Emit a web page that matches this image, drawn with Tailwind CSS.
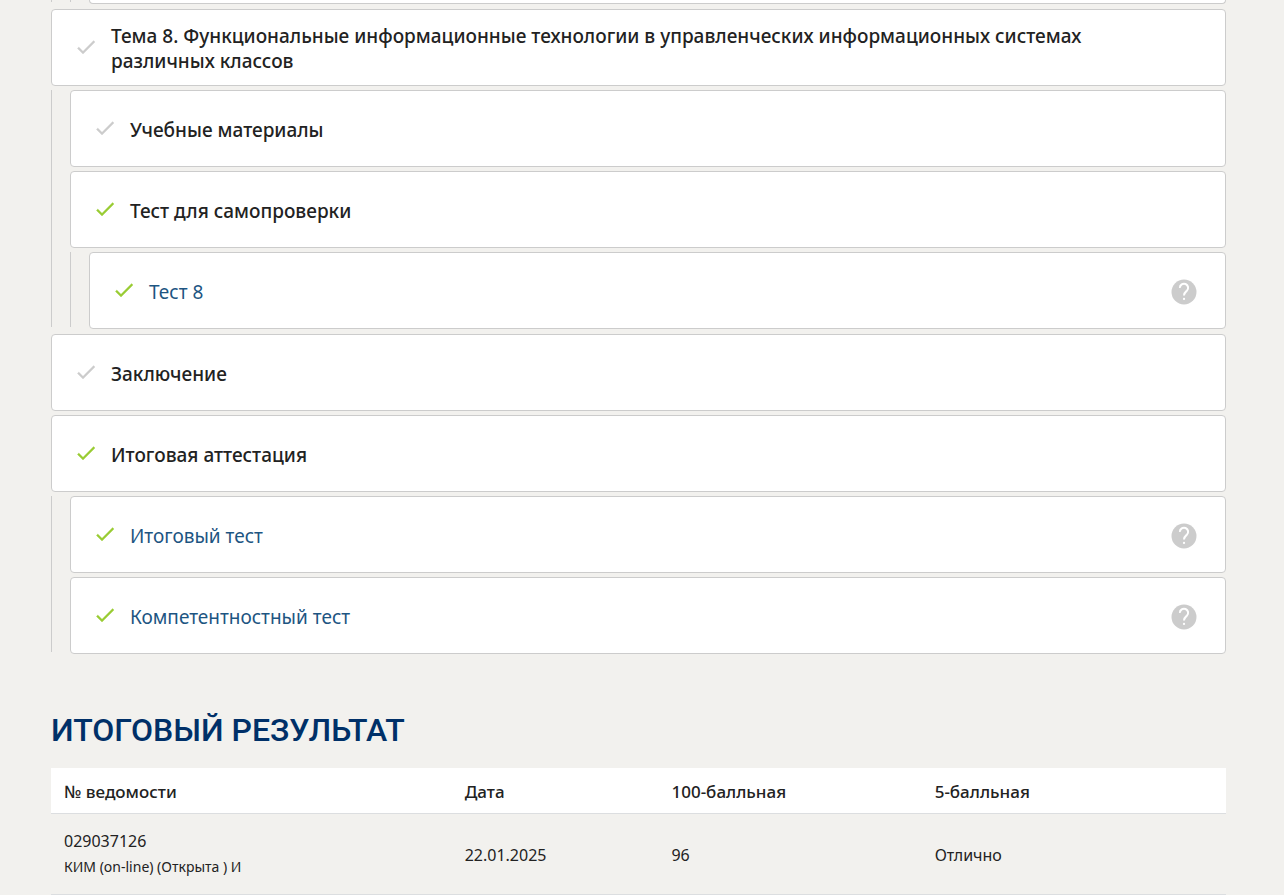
<!DOCTYPE html>
<html lang="ru">

<head>
    <meta charset="UTF-8">
    <meta name="viewport" content="width=device-width, initial-scale=1.0">
    <title>Итоговый результат</title>
    <script src="https://cdn.jsdelivr.net/npm/@tailwindcss/browser@4"></script>
</head>

<body class="bg-[#f2f1ee] font-['Noto_Sans',sans-serif] text-[#222]">

    <!-- shared icons -->
    <svg class="hidden">
        <symbol id="check" viewBox="0 0 24 24">
            <path fill="currentColor" stroke="currentColor" stroke-width="0.3" d="M9 16.17 4.83 12l-1.42 1.41L9 19 21 7l-1.41-1.41z" />
        </symbol>
        <symbol id="help" viewBox="0 0 24 24">
            <circle cx="12" cy="12" r="10" fill="currentColor" />
            <path fill="none" stroke="#fff" stroke-width="1.6" d="M8.7 8.700a3.3 3.3 0 1 1 5.6 2.300C13 12.200 12 12.700 12 14.800" />
            <circle cx="12" cy="17.500" r="0.9" fill="#fff" />
        </symbol>
    </svg>

    <main class="pl-[51px] pr-[58px]">

        <!-- course contents -->
        <section class="flex flex-col gap-1">

            <!-- end of the previous topic -->
            <div class="mb-px flex h-1">
                <div class="h-0.5 w-[19px] border-l border-[#ccc]"></div>
                <div class="h-0.5 w-[19px] border-l border-[#ccc]"></div>
                <div class="flex-1 rounded-b border border-t-0 border-[#ccc] bg-white"></div>
            </div>

            <div class="flex min-h-[77px] items-center gap-[13px] rounded border border-[#ccc] bg-white pr-[26px] pl-[22px]">
                <svg class="mb-0.5 size-6 shrink-0 text-[#ccc]"><use href="#check" /></svg>
                <h3 class="max-w-[1000px] pt-0.5 text-[19px]/[25px] font-medium">Тема 8. Функциональные информационные технологии в управленческих информационных системах различных классов</h3>
            </div>

            <div class="flex flex-col gap-1 border-l border-[#ccc] pl-[18px]">
                <div class="flex min-h-[77px] items-center gap-[13px] rounded border border-[#ccc] bg-white pr-[26px] pl-[22px]">
                    <svg class="mb-0.5 size-6 shrink-0 text-[#ccc]"><use href="#check" /></svg>
                    <h4 class="pt-1 text-[19px]/[25px] font-medium">Учебные материалы</h4>
                </div>
                <div class="flex min-h-[77px] items-center gap-[13px] rounded border border-[#ccc] bg-white pr-[26px] pl-[22px]">
                    <svg class="mb-0.5 size-6 shrink-0 text-[#9c3]"><use href="#check" /></svg>
                    <h4 class="pt-1 text-[19px]/[25px] font-medium">Тест для самопроверки</h4>
                </div>
                <div class="border-l border-[#ccc] pl-[18px]">
                    <div class="-mb-0.5 flex min-h-[77px] items-center gap-[13px] rounded border border-[#ccc] bg-white pr-[26px] pl-[22px]">
                        <svg class="mb-0.5 size-6 shrink-0 text-[#9c3]"><use href="#check" /></svg>
                        <a href="#" class="pt-1 text-[19px]/[25px] text-[#1d5582]">Тест 8</a>
                        <button type="button" aria-label="Справка" class="ml-auto pt-[3px] text-[#ccc]"><svg class="size-[30px]"><use href="#help" /></svg></button>
                    </div>
                </div>
            </div>

            <div class="mt-[3px] flex min-h-[77px] items-center gap-[13px] rounded border border-[#ccc] bg-white pr-[26px] pl-[22px]">
                <svg class="mb-0.5 size-6 shrink-0 text-[#ccc]"><use href="#check" /></svg>
                <h3 class="pt-1 text-[19px]/[25px] font-medium">Заключение</h3>
            </div>

            <div class="flex min-h-[77px] items-center gap-[13px] rounded border border-[#ccc] bg-white pr-[26px] pl-[22px]">
                <svg class="mb-0.5 size-6 shrink-0 text-[#9c3]"><use href="#check" /></svg>
                <h3 class="pt-1 text-[19px]/[25px] font-medium">Итоговая аттестация</h3>
            </div>

            <div class="flex flex-col gap-1 border-l border-[#ccc] pl-[18px]">
                <div class="flex min-h-[77px] items-center gap-[13px] rounded border border-[#ccc] bg-white pr-[26px] pl-[22px]">
                    <svg class="mb-0.5 size-6 shrink-0 text-[#9c3]"><use href="#check" /></svg>
                    <a href="#" class="pt-1 text-[19px]/[25px] text-[#1d5582]">Итоговый тест</a>
                    <button type="button" aria-label="Справка" class="ml-auto pt-[3px] text-[#ccc]"><svg class="size-[30px]"><use href="#help" /></svg></button>
                </div>
                <div class="-mb-0.5 flex min-h-[77px] items-center gap-[13px] rounded border border-[#ccc] bg-white pr-[26px] pl-[22px]">
                    <svg class="mb-0.5 size-6 shrink-0 text-[#9c3]"><use href="#check" /></svg>
                    <a href="#" class="pt-1 text-[19px]/[25px] text-[#1d5582]">Компетентностный тест</a>
                    <button type="button" aria-label="Справка" class="ml-auto pt-[3px] text-[#ccc]"><svg class="size-[30px]"><use href="#help" /></svg></button>
                </div>
            </div>
        </section>

        <!-- final result -->
        <section class="pt-[58px]">
            <h2 class="font-['Roboto',sans-serif] text-[32px]/[40px] font-medium text-[#003068] uppercase">Итоговый результат</h2>

            <table class="mt-[18px] w-full table-fixed text-left">
                <thead class="border-b border-[#dcdee0] bg-white text-[17px]/[24px]">
                    <tr class="h-[45px]">
                        <th class="w-[34.1%] px-[13px] pt-[3px] font-medium">№ ведомости</th>
                        <th class="w-[17.6%] px-[13px] pt-[3px] font-medium">Дата</th>
                        <th class="w-[22.4%] px-[13px] pt-[3px] font-medium">100-балльная</th>
                        <th class="px-[13px] pt-[3px] font-medium">5-балльная</th>
                    </tr>
                </thead>
                <tbody class="text-base/6">
                    <tr class="h-[81px] border-b border-[#dcdee0]">
                        <td class="px-[13px] pt-0.5">029037126<div class="text-[14px]/[28px]">КИМ (on-line) (Открыта ) И</div></td>
                        <td class="px-[13px] pt-0.5">22.01.2025</td>
                        <td class="px-[13px] pt-0.5">96</td>
                        <td class="px-[13px] pt-0.5">Отлично</td>
                    </tr>
                </tbody>
            </table>
        </section>

    </main>

</body>

</html>
